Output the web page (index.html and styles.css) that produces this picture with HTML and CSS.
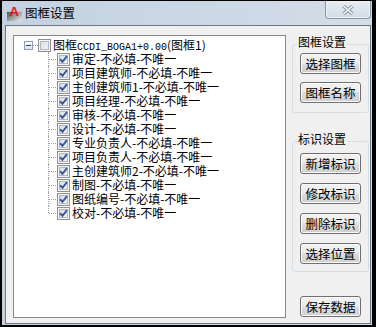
FILE: index.html
```html
<!DOCTYPE html>
<html lang="zh-CN">
<head>
    <meta charset="UTF-8">
    <title>图框设置</title>
    <link rel="stylesheet" href="styles.css">
</head>
<body>
    <div class="window">
        <!-- Title bar -->
        <div class="titlebar">
            <svg class="app-icon" width="16" height="16" viewBox="0 0 16 16">
                <defs>
                    <linearGradient id="iconBase" x1="0" y1="0" x2="1" y2="1">
                        <stop offset="0" stop-color="#4a4a4a"/>
                        <stop offset="1" stop-color="#ececec"/>
                    </linearGradient>
                </defs>
                <rect x="0" y="6" width="15" height="10" fill="url(#iconBase)"/>
                <rect x="0" y="6" width="15" height="1" fill="#c4c4c4"/>
                <text x="2.5" y="10.5" class="icon-letter">A</text>
            </svg>
            <span class="title">图框设置</span>
            <div class="close-btn">
                <svg width="12" height="10" viewBox="0 0 12 10">
                    <path d="M1.5 1 L10.5 9 M10.5 1 L1.5 9" stroke="#8b96a3" stroke-width="3.4" fill="none"/>
                    <path d="M1.5 1 L10.5 9 M10.5 1 L1.5 9" stroke="#fbfcfd" stroke-width="1.4" fill="none"/>
                </svg>
            </div>
        </div>

        <div class="client">
            <!-- Tree view -->
            <div class="tree">
                <div class="root-row">
                    <span class="expander"><span class="minus"></span></span>
                    <span class="stub"></span>
                    <span class="checkbox"></span>
                    <span class="label">图框<span class="mono">CCDI_BOGA1+0.00</span>(图框1)</span>
                </div>
                <ul class="children">
                    <li><span class="checkbox"><svg class="tick" viewBox="0 0 11 11"><path d="M2 5.2 L4.5 7.8 L9 2.2"/></svg></span><span class="label">审定-不必填-不唯一</span></li>
                    <li><span class="checkbox"><svg class="tick" viewBox="0 0 11 11"><path d="M2 5.2 L4.5 7.8 L9 2.2"/></svg></span><span class="label">项目建筑师-不必填-不唯一</span></li>
                    <li><span class="checkbox"><svg class="tick" viewBox="0 0 11 11"><path d="M2 5.2 L4.5 7.8 L9 2.2"/></svg></span><span class="label">主创建筑师1-不必填-不唯一</span></li>
                    <li><span class="checkbox"><svg class="tick" viewBox="0 0 11 11"><path d="M2 5.2 L4.5 7.8 L9 2.2"/></svg></span><span class="label">项目经理-不必填-不唯一</span></li>
                    <li><span class="checkbox"><svg class="tick" viewBox="0 0 11 11"><path d="M2 5.2 L4.5 7.8 L9 2.2"/></svg></span><span class="label">审核-不必填-不唯一</span></li>
                    <li><span class="checkbox"><svg class="tick" viewBox="0 0 11 11"><path d="M2 5.2 L4.5 7.8 L9 2.2"/></svg></span><span class="label">设计-不必填-不唯一</span></li>
                    <li><span class="checkbox"><svg class="tick" viewBox="0 0 11 11"><path d="M2 5.2 L4.5 7.8 L9 2.2"/></svg></span><span class="label">专业负责人-不必填-不唯一</span></li>
                    <li><span class="checkbox"><svg class="tick" viewBox="0 0 11 11"><path d="M2 5.2 L4.5 7.8 L9 2.2"/></svg></span><span class="label">项目负责人-不必填-不唯一</span></li>
                    <li><span class="checkbox"><svg class="tick" viewBox="0 0 11 11"><path d="M2 5.2 L4.5 7.8 L9 2.2"/></svg></span><span class="label">主创建筑师2-不必填-不唯一</span></li>
                    <li><span class="checkbox"><svg class="tick" viewBox="0 0 11 11"><path d="M2 5.2 L4.5 7.8 L9 2.2"/></svg></span><span class="label">制图-不必填-不唯一</span></li>
                    <li><span class="checkbox"><svg class="tick" viewBox="0 0 11 11"><path d="M2 5.2 L4.5 7.8 L9 2.2"/></svg></span><span class="label">图纸编号-不必填-不唯一</span></li>
                    <li><span class="checkbox"><svg class="tick" viewBox="0 0 11 11"><path d="M2 5.2 L4.5 7.8 L9 2.2"/></svg></span><span class="label">校对-不必填-不唯一</span></li>
                </ul>
            </div>

            <!-- Buttons on the right -->
            <div class="side">
                <div class="group frame-group">
                    <span class="legend">图框设置</span>
                    <button type="button">选择图框</button>
                    <button type="button">图框名称</button>
                </div>
                <div class="group mark-group">
                    <span class="legend">标识设置</span>
                    <button type="button">新增标识</button>
                    <button type="button">修改标识</button>
                    <button type="button">删除标识</button>
                    <button type="button">选择位置</button>
                </div>
                <button type="button" class="save">保存数据</button>
            </div>
        </div>
    </div>
</body>
</html>
```

FILE: styles.css
```css
body {
    margin: 0;
    width: 376px;
    height: 327px;
    overflow: hidden;
    background-color: #000;
    font-family: "Noto Sans CJK SC", sans-serif;
    font-size: 12px;
    color: #000;
}

.window {
    box-sizing: border-box;
    width: 370px;
    height: 324px;
    margin: 1px 4px 2px 2px;
    padding: 0 1px 1px 3px;
    background: linear-gradient(to right, #c3d1e0, #d3dde8);
}

/* Title bar */
.titlebar {
    display: flex;
    align-items: flex-start;
    height: 24px;
}

.app-icon {
    margin: 4px 0 0 2px;
    flex: none;
}

.icon-letter {
    font-family: "Liberation Sans", sans-serif;
    font-weight: bold;
    font-size: 13px;
    fill: #e3101c;
}

.title {
    margin: 4px 0 0 2px;
    font-size: 12.5px;
    line-height: 16px;
}

.close-btn {
    margin-left: auto;
    box-sizing: border-box;
    width: 46px;
    height: 18px;
    border: 1px solid #8895a4;
    border-top: none;
    border-radius: 0 0 4px 4px;
    background: linear-gradient(#e6ecf2, #d2dbe5);
    box-shadow: inset 0 0 0 1px #eef2f6;
    display: flex;
    justify-content: center;
    align-items: center;
}

/* Client area */
.client {
    box-sizing: border-box;
    height: 299px;
    border: 1px solid #6b7886;
    background-color: #f0f0f0;
    display: flex;
    padding: 9px 0 0 7px;
}

.tree {
    box-sizing: border-box;
    width: 273px;
    height: 283px;
    border: 1px solid #828790;
    background-color: #fff;
    padding-top: 2px;
    flex: none;
}

.root-row {
    display: flex;
    align-items: center;
    height: 14px;
}

.expander {
    box-sizing: border-box;
    width: 9px;
    height: 9px;
    margin-left: 10px;
    border: 1px solid #8e9fb4;
    background: linear-gradient(#ffffff, #dfe4ea);
    display: flex;
    justify-content: center;
    align-items: center;
}

.minus {
    width: 5px;
    height: 1px;
    background-color: #1d3b6c;
}

.stub {
    width: 5px;
    border-top: 1px dotted #a0a0a0;
}

.checkbox {
    box-sizing: border-box;
    width: 13px;
    height: 13px;
    flex: none;
    border: 1px solid #8e8f8f;
    background: linear-gradient(135deg, #d4d9df, #f9f9f9);
    box-shadow: inset 0 0 0 1px #f5f5f5, inset 0 0 0 2px #b3b8be;
}

.tick {
    display: block;
    width: 11px;
    height: 11px;
}

.tick path {
    fill: none;
    stroke: #36589e;
    stroke-width: 2;
}

.label {
    display: block;
    height: 14px;
    margin-left: 2px;
    line-height: 14px;
    white-space: nowrap;
}

.mono {
    font-family: "Liberation Mono", monospace;
    font-size: 10px;
}

.children {
    list-style: none;
    margin: 0 0 0 34px;
    padding: 0;
}

.children li {
    position: relative;
    display: flex;
    align-items: center;
    height: 14px;
    padding-left: 9px;
}

/* tree connector lines */
.children li::before {
    content: '';
    position: absolute;
    left: 0;
    top: 0;
    bottom: 0;
    border-left: 1px dotted #a0a0a0;
}

.children li:last-child::before {
    bottom: 7px;
}

.children li::after {
    content: '';
    position: absolute;
    left: 1px;
    top: 7px;
    width: 7px;
    border-top: 1px dotted #a0a0a0;
}

/* Right column */
.side {
    margin-left: 6px;
    width: 77px;
    display: flex;
    flex-direction: column;
}

.group {
    position: relative;
    box-sizing: border-box;
    border: 1px solid #d5dfe5;
    border-radius: 3px;
    display: flex;
    flex-direction: column;
}

.frame-group {
    margin-top: 9px;
    padding: 8px 0 9px 7px;
    gap: 8px;
}

.mark-group {
    margin-top: 28px;
    padding: 11px 0 7px 7px;
    gap: 9px;
}

.legend {
    position: absolute;
    top: -10px;
    left: 4px;
    padding: 0 1px;
    background-color: #f0f0f0;
    line-height: 14px;
}

button {
    box-sizing: border-box;
    width: 61px;
    height: 21px;
    padding: 0;
    border: 1px solid #707070;
    border-radius: 3px;
    background: linear-gradient(#f2f2f2 0%, #ebebeb 50%, #dddddd 50%, #cfcfcf 100%);
    box-shadow: inset 0 0 0 1px #fbfbfb;
    font-family: "Noto Sans CJK SC", sans-serif;
    font-size: 12.5px;
    line-height: 19px;
    color: #000;
}

.save {
    margin: 24px 0 0 8px;
}
```
